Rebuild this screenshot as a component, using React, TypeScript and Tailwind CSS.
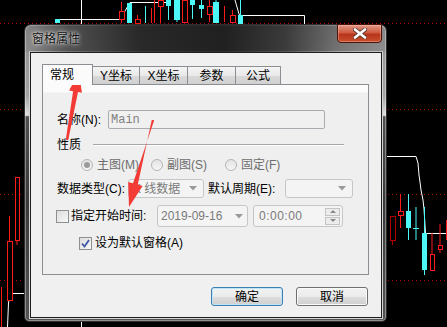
import React from 'react'

// 背景のチャート（ダイアログの後ろ）
type Candle = { x: number; w: number; top: number; bottom: number; wickTop: number; wickBottom: number; color: string; fill?: boolean }

const RED = '#ff1a1a'
const CYAN = '#4df7f7'

const candles: Candle[] = [
  // top strip
  { x: 55, w: 5, top: 19, bottom: 23, wickTop: 19, wickBottom: 23, color: CYAN, fill: true },
  { x: 119, w: 5, top: 11, bottom: 19, wickTop: 2, wickBottom: 23, color: RED },
  { x: 127, w: 5, top: 3, bottom: 23, wickTop: 3, wickBottom: 23, color: CYAN, fill: true },
  { x: 135, w: 5, top: 19, bottom: 23, wickTop: 15, wickBottom: 23, color: RED },
  { x: 145, w: 1, top: 6, bottom: 23, wickTop: 6, wickBottom: 23, color: CYAN, fill: true },
  { x: 151, w: 1, top: 8, bottom: 23, wickTop: 8, wickBottom: 23, color: RED, fill: true },
  { x: 154, w: 1, top: 0, bottom: 23, wickTop: 0, wickBottom: 23, color: RED, fill: true },
  { x: 158, w: 5, top: 0, bottom: 6, wickTop: 0, wickBottom: 23, color: RED },
  { x: 166, w: 5, top: 0, bottom: 6, wickTop: 0, wickBottom: 20, color: CYAN, fill: true },
  { x: 174, w: 6, top: 0, bottom: 20, wickTop: 0, wickBottom: 22, color: CYAN, fill: true },
  { x: 182, w: 5, top: 0, bottom: 22, wickTop: 0, wickBottom: 22, color: RED },
  { x: 190, w: 5, top: 0, bottom: 5, wickTop: 0, wickBottom: 19, color: CYAN, fill: true },
  { x: 199, w: 5, top: 5, bottom: 9, wickTop: 0, wickBottom: 18, color: CYAN, fill: true },
  { x: 207, w: 5, top: 6, bottom: 14, wickTop: 0, wickBottom: 22, color: RED },
  { x: 213, w: 6, top: 2, bottom: 23, wickTop: 0, wickBottom: 23, color: CYAN, fill: true },
  { x: 224, w: 1, top: 6, bottom: 22, wickTop: 6, wickBottom: 22, color: RED, fill: true },
  { x: 230, w: 5, top: 15, bottom: 22, wickTop: 10, wickBottom: 23, color: RED },
  { x: 238, w: 5, top: 15, bottom: 24, wickTop: 0, wickBottom: 24, color: CYAN, fill: true },
  // left strip
  { x: 15, w: 4, top: 177, bottom: 240, wickTop: 177, wickBottom: 245, color: RED },
  { x: 7, w: 5, top: 241, bottom: 300, wickTop: 216, wickBottom: 300, color: RED },
  // right strip
  { x: 390, w: 5, top: 216, bottom: 240, wickTop: 216, wickBottom: 245, color: '#b00000' },
  { x: 398, w: 5, top: 211, bottom: 215, wickTop: 194, wickBottom: 228, color: RED },
  { x: 406, w: 5, top: 211, bottom: 228, wickTop: 194, wickBottom: 240, color: CYAN, fill: true },
  { x: 413, w: 6, top: 228, bottom: 229, wickTop: 207, wickBottom: 240, color: CYAN, fill: true },
  { x: 422, w: 5, top: 233, bottom: 270, wickTop: 207, wickBottom: 275, color: CYAN, fill: true },
  { x: 430, w: 4, top: 254, bottom: 270, wickTop: 233, wickBottom: 270, color: RED },
  { x: 438, w: 4, top: 245, bottom: 249, wickTop: 224, wickBottom: 253, color: RED },
  { x: 446, w: 1, top: 220, bottom: 240, wickTop: 220, wickBottom: 240, color: RED, fill: true },
]

function Chart() {
  return (
    <svg className="absolute inset-0" width="447" height="327" viewBox="0 0 447 327">
      {[23, 109, 194, 280].map(y => (
        <line key={y} x1="0" y1={y + 0.5} x2="447" y2={y + 0.5} stroke="#b00000" strokeDasharray="1 3" />
      ))}
      <line x1="81.5" y1="0" x2="81.5" y2="327" stroke="#fff" />
      <line x1="1.5" y1="287" x2="1.5" y2="327" stroke={RED} />
      <polyline points="55,19.5 120,19.5 130,2.5 171,2.5" fill="none" stroke="#fff" />
      <polyline points="235,0 239,14 240,15.5 304.5,15.5 304.5,24" fill="none" stroke="#fff" />
      <polyline points="7.5,327 8.5,303 10,293.5 24,293.5" fill="none" stroke="#fff" />
      <polyline points="386,156.5 416,156.5 418,163 419,175 420,182 421,190 423,200 424,209 425,225 425.5,233.5 447,233.5" fill="none" stroke="#fff" />
      {candles.map((c, i) => (
        <g key={i}>
          <line x1={c.x + c.w / 2} y1={c.wickTop} x2={c.x + c.w / 2} y2={c.wickBottom} stroke={c.color} />
          {c.fill
            ? <rect x={c.x} y={c.top} width={c.w} height={c.bottom - c.top} fill={c.color} />
            : <rect x={c.x + 0.5} y={c.top + 0.5} width={c.w} height={c.bottom - c.top} fill="#000" stroke={c.color} />}
        </g>
      ))}
    </svg>
  )
}

// 赤い矢印（スクリーンショット上の注釈）
function Arrows() {
  return (
    <svg className="absolute inset-0 pointer-events-none" width="447" height="327" viewBox="0 0 447 327">
      <polygon points="65.8,139.8 73.1,91.3 69.1,90.6 79,72 81.9,92.8 78,92.1 68.2,140.2" fill="#f23b35" />
      <polygon points="151.8,119.7 137.8,184.5 142.6,185.9 129,207 128.2,181.9 133,183.2 154.2,120.3" fill="#f23b35" />
    </svg>
  )
}

function DropArrow() {
  return (
    <svg width="8" height="5" viewBox="0 0 8 5"><polygon points="0,0 8,0 4,4.5" fill="#9a9a9a" /></svg>
  )
}

function Radio({ checked, label }: { checked?: boolean; label: string }) {
  return (
    <div className="flex items-center">
      <span className="w-[12px] h-[12px] rounded-full border border-[#b4b4b4] bg-[linear-gradient(180deg,#e4e4e4,#f6f6f6)] flex items-center justify-center">
        {checked && <span className="w-[6px] h-[6px] rounded-full bg-[#9a9a9a]" />}
      </span>
      <span className="ml-[4px] text-[#6d6d6d]">{label}</span>
    </div>
  )
}

function Checkbox({ checked }: { checked?: boolean }) {
  return (
    <span className="w-[13px] h-[13px] border border-[#8e8f8f] bg-[linear-gradient(135deg,#dcdcdc,#f8f8f8)] flex items-center justify-center shrink-0">
      {checked && (
        <svg width="9" height="9" viewBox="0 0 9 9"><path d="M1 4.5 L3.5 7.5 L8 1" fill="none" stroke="#3d57a5" strokeWidth="1.8" /></svg>
      )}
    </span>
  )
}

export default function App() {
  const tabBase = "h-[18px] flex items-center justify-center border-t border-r border-[#8c8e94] bg-[linear-gradient(180deg,#f4f4f4_0%,#e9e9e9_50%,#d9d9d9_51%,#d0d0d0_100%)] text-black"
  const field = "border border-[#c6c6c6] rounded-[3px] bg-[#f4f4f4] text-[#7a7a7a]"

  return (
    <div className="relative w-[447px] h-[327px] overflow-hidden bg-black font-['Liberation_Sans','Noto_Sans_CJK_SC',sans-serif] text-[12px] leading-[14px]">
      <Chart />

      {/* ダイアログ本体 */}
      <div className="absolute left-[24px] top-[24px] w-[363px] h-[298px] flex flex-col rounded-t-[7px] rounded-b-[5px] border border-[#2e2e2e] bg-[linear-gradient(180deg,#8e8e8e_0%,#a4a4a4_24%,#dedede_30.5%,#505050_31%,#3a3a3a_60%,#555555_100%)] shadow-[inset_0_0_0_1px_rgba(255,255,255,0.35)]">
        <div className="relative h-[27px] flex items-start justify-between rounded-t-[6px] bg-[linear-gradient(90deg,rgba(0,0,0,0.05)_0%,rgba(0,0,0,0.45)_12%,rgba(0,0,0,0.72)_32%,rgba(0,0,0,0.78)_55%,rgba(0,0,0,0.6)_72%,rgba(0,0,0,0.2)_88%,rgba(0,0,0,0.05)_100%)]">
          <span className="pl-[7px] pt-[7px] text-[12px] leading-[14px] text-[#111] [text-shadow:0_0_5px_rgba(255,255,255,0.9),0_0_2px_rgba(255,255,255,0.8)]">窗格属性</span>
          <div className="mr-[4px] -mt-px w-[45px] h-[19px] rounded-b-[4px] border border-[#4a140c] bg-[linear-gradient(180deg,#e19a88_0%,#cf5a40_45%,#b8341a_55%,#c9502e_100%)] flex items-center justify-center shadow-[inset_0_0_0_1px_rgba(255,200,180,0.4)]">
            <svg width="14" height="11" viewBox="0 0 14 11">
              <path d="M2 1.5 L12 9.5 M12 1.5 L2 9.5" stroke="#5a3a36" strokeWidth="4.2" strokeLinecap="round" />
              <path d="M2 1.5 L12 9.5 M12 1.5 L2 9.5" stroke="#ffffff" strokeWidth="2.6" strokeLinecap="round" />
            </svg>
          </div>
        </div>

        {/* クライアント領域 */}
        <div className="ml-[5px] mr-[4px] h-[266px] border border-[#1e1e1e] bg-[#f0f0f0] shadow-[0_0_0_1px_#d4d4d4] pl-[11px] pt-[11px]">
          {/* タブ */}
          <div className="flex items-end h-[20px]">
            <div className="relative z-10 w-[51px] h-[21px] -mb-px border-t border-l border-r border-[#8c8e94] bg-[#fbfbfb] flex items-start pl-[7px] pt-[3px] text-black">常规</div>
            <div className={`${tabBase} w-[47px]`}>Y坐标</div>
            <div className={`${tabBase} w-[48px]`}>X坐标</div>
            <div className={`${tabBase} w-[48px]`}>参数</div>
            <div className={`${tabBase} w-[45px]`}>公式</div>
          </div>

          {/* タブパネル */}
          <div className="w-[327px] h-[191px] border border-[#8c8e94] bg-[linear-gradient(180deg,#fbfbfb_0px,#fbfbfb_7px,#efefef_8px,#efefef_100%)] pl-[14px] pt-[25px] flex flex-col">
            <div className="flex items-center h-[19px]">
              <span className="w-[51px] text-black">名称(N):</span>
              <div className="w-[217px] h-[19px] border border-[#a9abb0] rounded-[2px] bg-[#f0f0f0] flex items-center pl-[2px] font-['Liberation_Mono',monospace] text-[#808080]">Main</div>
            </div>

            <div className="mt-[8px] flex items-center h-[16px]">
              <span className="text-black">性质</span>
              <div className="ml-[12px] w-[251px] h-[2px] border-t border-[#a6a6a6] bg-white" />
            </div>

            <div className="mt-[4px] flex items-center h-[16px] pl-[24px]">
              <div className="w-[70px]"><Radio checked label="主图(M)" /></div>
              <div className="w-[74px]"><Radio label="副图(S)" /></div>
              <Radio label="固定(F)" />
            </div>

            <div className="mt-[6px] flex items-center h-[19px]">
              <span className="w-[71px] text-black">数据类型(C):</span>
              <div className={`${field} w-[76px] h-[19px] flex items-center justify-between pl-[4px] pr-[6px]`}>
                <span>K 线数据</span>
                <DropArrow />
              </div>
              <span className="ml-[4px] w-[77px] text-black">默认周期(E):</span>
              <div className={`${field} w-[68px] h-[19px] flex items-center justify-end pr-[6px]`}>
                <DropArrow />
              </div>
            </div>

            <div className="mt-[7px] flex items-center h-[22px]">
              <div className="-ml-px"><Checkbox /></div>
              <span className="ml-[2px] w-[86px] text-black">指定开始时间:</span>
              <div className={`${field} w-[91px] h-[22px] flex items-center justify-between pl-[3px] pr-[4px]`}>
                <span>2019-09-16</span>
                <DropArrow />
              </div>
              <div className={`${field} ml-[5px] w-[90px] h-[22px] flex items-center justify-between pl-[5px] pr-[2px]`}>
                <span className="tracking-[0.5px]">0:00:00</span>
                <div className="flex flex-col gap-px">
                  <div className="w-[15px] h-[8px] border border-[#c4c4c4] bg-[#ececec] flex items-center justify-center">
                    <svg width="6" height="3" viewBox="0 0 6 3"><polygon points="0,3 6,3 3,0" fill="#8a8a8a" /></svg>
                  </div>
                  <div className="w-[15px] h-[8px] border border-[#c4c4c4] bg-[#ececec] flex items-center justify-center">
                    <svg width="6" height="3" viewBox="0 0 6 3"><polygon points="0,0 6,0 3,3" fill="#8a8a8a" /></svg>
                  </div>
                </div>
              </div>
            </div>

            <div className="mt-[8px] flex items-center h-[16px] pl-[22px]">
              <Checkbox checked />
              <span className="ml-[3px] text-black">设为默认窗格(A)</span>
            </div>
          </div>

          {/* ボタン */}
          <div className="mt-[12px] flex justify-end gap-[13px] pr-[13px]">
            <button className="w-[72px] h-[19px] rounded-[3px] border border-[#3c7fb1] bg-[linear-gradient(180deg,#f2f2f2_0%,#ebebeb_50%,#dddddd_51%,#cfcfcf_100%)] shadow-[inset_0_0_0_1px_#bfe4f8] text-black text-[12px] leading-[14px]">确定</button>
            <button className="w-[72px] h-[19px] rounded-[3px] border border-[#707070] bg-[linear-gradient(180deg,#f2f2f2_0%,#ebebeb_50%,#dddddd_51%,#cfcfcf_100%)] shadow-[inset_0_0_0_1px_#fafafa] text-black text-[12px] leading-[14px]">取消</button>
          </div>
        </div>
      </div>

      <Arrows />
    </div>
  )
}
